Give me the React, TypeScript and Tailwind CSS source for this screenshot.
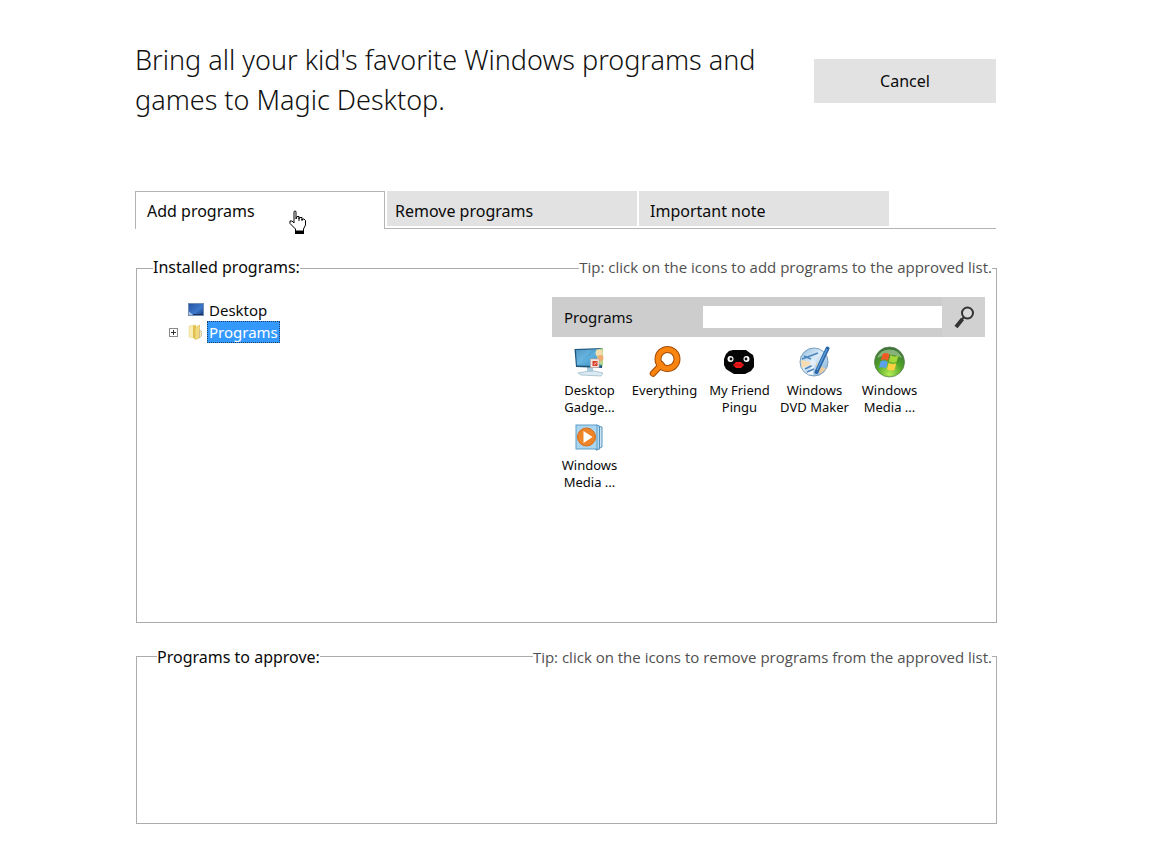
import React, { useState } from 'react';

interface Program {
  id: string;
  lines: string[];
  icon: React.ReactNode;
}

const GadgetsIcon = () => (
  <svg width="32" height="32" viewBox="0 0 32 32" aria-hidden="true">
    <defs>
      <linearGradient id="gadgetScreen" x1="0" y1="0" x2="1" y2="1">
        <stop offset="0" stopColor="#2f73a8" />
        <stop offset="0.5" stopColor="#5fb0dd" />
        <stop offset="1" stopColor="#3c8cc4" />
      </linearGradient>
    </defs>
    <path d="M4 27 L18 24.500 L29 27 L27 30 L7 29 Z" fill="#dbeaf2" stroke="#9dbccd" strokeWidth="0.8" />
    <path d="M13 21h6v5h-6z" fill="#a9cbdd" />
    <path d="M0.500 3 L29 2 L28 22 L2 21 Z" fill="#1f5378" />
    <path d="M2 4 L27 3 L27 20 L3 19.500 Z" fill="url(#gadgetScreen)" />
    <path d="M2 4 L18 4 L5 18 L3 19 Z" fill="#7cc4ea" opacity="0.45" />
    <path d="M22 4 L29 2 L29 20 L24 17 Z" fill="#b9d88c" />
    <circle cx="25" cy="7" r="3.500" fill="#f3dcae" />
    <circle cx="26.500" cy="12" r="3" fill="#efaa72" />
    <rect x="16.500" y="13" width="8.500" height="8.500" fill="#f4e3dc" stroke="#c9a8a0" strokeWidth="0.6" />
    <rect x="18.500" y="15" width="5" height="5" fill="#d8432f" />
    <path d="M20 18.500 L22.500 16.500" stroke="#ffffff" strokeWidth="0.8" />
  </svg>
);

const EverythingIcon = () => (
  <svg width="32" height="32" viewBox="0 0 32 32" aria-hidden="true">
    <path d="M12.500 18.500 L4 27.500" stroke="#a14c05" strokeWidth="6.500" strokeLinecap="round" />
    <circle cx="18.500" cy="13" r="9.500" fill="none" stroke="#a14c05" strokeWidth="7" />
    <path d="M12.500 18.500 L4 27.500" stroke="#f98410" strokeWidth="4.500" strokeLinecap="round" />
    <circle cx="18.500" cy="13" r="9.500" fill="none" stroke="#f98410" strokeWidth="5" />
  </svg>
);

const PinguIcon = () => (
  <svg width="32" height="32" viewBox="0 0 32 32" aria-hidden="true">
    <path d="M9 4h13l4 3 3 2 1 4v8l-3 4-4 2-2 1H10l-5-3-3-2-2-4v-6l2-5 3-3z" fill="#050505" />
    <circle cx="6.500" cy="13" r="3" fill="#ffffff" />
    <circle cx="22.500" cy="13" r="3" fill="#ffffff" />
    <circle cx="7" cy="13" r="1.400" fill="#111111" />
    <circle cx="22" cy="13" r="1.400" fill="#111111" />
    <path d="M9 19 L12 16 L17 16 L20 19 L17 22 L12 22 Z" fill="#f01818" />
    <path d="M9 19h11" stroke="#9c0b0b" strokeWidth="0.8" />
  </svg>
);

const DvdMakerIcon = () => (
  <svg width="32" height="32" viewBox="0 0 32 32" aria-hidden="true">
    <defs>
      <linearGradient id="dvdDisc" x1="0" y1="0" x2="1" y2="1">
        <stop offset="0" stopColor="#8dbbe2" />
        <stop offset="0.45" stopColor="#dcebf7" />
        <stop offset="1" stopColor="#74a9d6" />
      </linearGradient>
    </defs>
    <circle cx="15" cy="16" r="14" fill="url(#dvdDisc)" stroke="#7d9fba" strokeWidth="1" />
    <path d="M15 17 L2 14 L3 22 Z" fill="#f6dcae" />
    <path d="M16 17 L27 23 L21 28 Z" fill="#ecca9c" />
    <path d="M15 17 L8 28 L14 29 Z" fill="#ffffff" opacity="0.8" />
    <path d="M3 13 L19 7 M5 10 L12 13 M6 23 L16 18 M8 26 L15 23" stroke="#4d86bd" strokeWidth="1.600" />
    <circle cx="14" cy="17" r="3" fill="#e4f0f9" />
    <path d="M28.500 2.500 L17.500 26" stroke="#2a66a6" strokeWidth="4" strokeLinecap="round" />
    <path d="M28 3 L18 24" stroke="#5a9bd8" strokeWidth="1.500" />
  </svg>
);

const MediaCenterIcon = () => (
  <svg width="32" height="32" viewBox="0 0 32 32" aria-hidden="true">
    <defs>
      <radialGradient id="orb" cx="0.5" cy="0.9" r="0.9">
        <stop offset="0" stopColor="#b4ec54" />
        <stop offset="0.5" stopColor="#50a428" />
        <stop offset="1" stopColor="#3a6b3a" />
      </radialGradient>
    </defs>
    <circle cx="15.500" cy="16" r="15" fill="url(#orb)" stroke="#57824c" strokeWidth="0.8" />
    <path d="M3 12 A13.500 13.500 0 0 1 28 12 Q15.500 5 3 12 Z" fill="#dcefd0" opacity="0.45" />
    <path d="M8.500 8 Q12 6 15.500 8.500 L14 15 Q10.500 12.500 7 14.500 Z" fill="#ee5a24" />
    <path d="M16.500 9 Q20 11.500 24.500 9.500 L22.500 16 Q19 17.500 15 15.500 Z" fill="#a5d63a" />
    <path d="M6.500 15.500 Q10 13.500 13.700 16 L12 22.500 Q8.500 20.500 5 22 Z" fill="#5aa0ea" />
    <path d="M14.700 16.800 Q18.500 19 22.300 17.200 L20.500 24 Q17 25.500 13 23.200 Z" fill="#fdd040" />
  </svg>
);

const MediaPlayerIcon = () => (
  <svg width="32" height="32" viewBox="0 0 32 32" aria-hidden="true">
    <path d="M22 5 L28 6 L28 26 L22 29 Z" fill="#cfe4f2" stroke="#5795bd" strokeWidth="1" />
    <path d="M22 4 L25.500 5 L25.500 28 L22 29 Z" fill="#b4d8ee" stroke="#4c8fbc" strokeWidth="1" />
    <rect x="2" y="4" width="21" height="24" fill="#a9d5f0" stroke="#5f9fc8" strokeWidth="1" />
    <circle cx="12.500" cy="16" r="9" fill="#ee8428" stroke="#d66c17" strokeWidth="1" />
    <path d="M9.500 10 L18.500 16 L9.500 22 Z" fill="#ffffff" />
  </svg>
);

const SearchIcon = () => (
  <svg width="22" height="24" viewBox="0 0 22 24" aria-hidden="true">
    <circle cx="14.500" cy="8" r="5.500" fill="#d9d9d9" stroke="#333333" strokeWidth="2" />
    <path d="M11 12 L8.500 15" stroke="#333333" strokeWidth="2" />
    <path d="M9.500 14 L3 22" stroke="#333333" strokeWidth="3.800" />
  </svg>
);

const DesktopIcon = () => (
  <svg width="16" height="16" viewBox="0 0 16 16" aria-hidden="true">
    <defs>
      <linearGradient id="desk" x1="0" y1="0" x2="1" y2="1">
        <stop offset="0" stopColor="#26549f" />
        <stop offset="0.6" stopColor="#3d78cc" />
        <stop offset="1" stopColor="#17356f" />
      </linearGradient>
    </defs>
    <rect x="0.500" y="1.500" width="15" height="12" fill="url(#desk)" stroke="#6f8fb5" />
    <path d="M1 13 V9.500 L5 13 Z" fill="#a9c8ea" />
    <path d="M5 12.500h10" stroke="#1b2f5a" />
  </svg>
);

const FolderIcon = () => (
  <svg width="16" height="16" viewBox="0 0 16 16" aria-hidden="true">
    <path d="M1 2 L6 1 L6 14 L1 13 Z" fill="#f8ecb4" stroke="#ead888" strokeWidth="0.6" />
    <path d="M5 2 L8 0.500 L8 15 L5 14 Z" fill="#e2c350" />
    <path d="M7 4 L11.500 1 L11.500 14 L7 15.500 Z" fill="#f0da7c" stroke="#d8b94c" strokeWidth="0.6" />
    <path d="M11.500 6 L13.500 7 L13.500 12 L11.500 14 Z" fill="#f2e8c0" stroke="#b9ae84" strokeWidth="0.6" />
  </svg>
);

const HandPointer = () => (
  <svg width="18" height="24" viewBox="0 0 18 24" aria-hidden="true">
    <path
      d="M5 2 Q5 1 6 1 Q7 1 7 2 V9 L8 6.500 H10 V9 L10.500 7.500 H13 V10 L13.500 9 H15 L16.500 10.500 V15 L14.500 19 V21 H6.500 V19 L1 13.500 V11 H3 L5 13 Z"
      fill="#ffffff"
      stroke="#000000"
      strokeLinejoin="round"
    />
    <path d="M10 8v3M13 9v2" stroke="#000000" />
    <path d="M6 21h9v3H6z" fill="#000000" />
  </svg>
);

const programs: Program[] = [
  { id: 'gadgets', lines: ['Desktop', 'Gadge...'], icon: <GadgetsIcon /> },
  { id: 'everything', lines: ['Everything'], icon: <EverythingIcon /> },
  { id: 'pingu', lines: ['My Friend', 'Pingu'], icon: <PinguIcon /> },
  { id: 'dvd', lines: ['Windows', 'DVD Maker'], icon: <DvdMakerIcon /> },
  { id: 'media-center', lines: ['Windows', 'Media ...'], icon: <MediaCenterIcon /> },
  { id: 'media-player', lines: ['Windows', 'Media ...'], icon: <MediaPlayerIcon /> },
];

interface PanelProps {
  title: string;
  tip: string;
  className: string;
  titleClassName: string;
  children?: React.ReactNode;
}

const Panel = ({ title, tip, className, titleClassName, children }: PanelProps) => (
  <section className={`ml-px border border-[#ababab] ${className}`}>
    {/* title and tip sit on the top border */}
    <div className={`flex h-6 items-center justify-between pr-1 leading-6 ${titleClassName}`}>
      <h2 className="bg-white text-base">{title}</h2>
      <p className="bg-white font-['Open_Sans',sans-serif] text-[15px] text-[#505050]">{tip}</p>
    </div>
    {children}
  </section>
);

const App = () => {
  const [query, setQuery] = useState('');

  return (
    <main className="min-h-screen bg-white pt-10 pr-[155px] pb-10 pl-[135px] font-['Noto_Sans','Open_Sans',sans-serif] text-[#0a0a0a]">
      <header className="mr-px flex items-start justify-between">
        <h1 className="text-[27px] leading-10 font-light text-[#111111]">
          Bring all your kid's favorite Windows programs and
          <br />
          games to Magic Desktop.
        </h1>
        <button type="button" className="mt-[19px] h-11 w-[182px] shrink-0 bg-[#e2e2e2] text-base">
          Cancel
        </button>
      </header>

      <div role="tablist" className="mt-[71px] mr-px flex">
        <button
          type="button"
          role="tab"
          aria-selected="true"
          className="relative h-[38px] w-[250px] border-x border-t border-[#b4b4b4] pl-[11px] text-left text-base"
        >
          Add programs
          <span className="absolute top-[18px] left-[153px]">
            <HandPointer />
          </span>
        </button>
        <div className="flex flex-1 gap-0.5 border-b border-[#b4b4b4] pb-0.5 pl-0.5">
          <button type="button" role="tab" aria-selected="false" className="w-[250px] bg-[#e2e2e2] pt-1 pl-2 text-left text-base">
            Remove programs
          </button>
          <button type="button" role="tab" aria-selected="false" className="w-[250px] bg-[#e2e2e2] pt-1 pl-[11px] text-left text-base">
            Important note
          </button>
        </div>
      </div>

      <Panel
        title="Installed programs:"
        tip="Tip: click on the icons to add programs to the approved list."
        className="mt-[39px] min-h-[355px]"
        titleClassName="-mt-3.5 pl-4"
      >
        <div className="flex justify-between pt-[18px] pr-[11px] pl-8">
          <ul className="mt-0.5 text-[15px] leading-[22px]">
            <li className="flex items-center gap-[3px] pl-[19px]">
              <DesktopIcon />
              <span className="px-0.5">Desktop</span>
            </li>
            <li className="flex items-center">
              <button
                type="button"
                aria-label="Expand Programs"
                className="mr-2.5 flex size-[9px] items-center justify-center border border-[#8a8a8a]"
              >
                <svg width="5" height="5" viewBox="0 0 5 5" aria-hidden="true">
                  <path d="M0 2.500h5M2.500 0v5" stroke="#333333" />
                </svg>
              </button>
              <FolderIcon />
              <span className="ml-[3px] border border-dotted border-[#1d3f66] bg-[#3399ff] px-px leading-5 text-white">Programs</span>
            </li>
          </ul>

          <div className="w-[433px]">
            <div className="flex h-10 items-center bg-[#cdcdcd] pl-3">
              <label htmlFor="program-search" className="w-[139px] text-[15px]">
                Programs
              </label>
              <input
                id="program-search"
                type="text"
                value={query}
                onChange={(e) => setQuery(e.target.value)}
                className="h-[22px] min-w-0 flex-1 bg-white px-1 text-[13px] outline-none"
              />
              <button type="button" aria-label="Search" className="flex h-10 w-[43px] items-center justify-center bg-[#d1d1d1]">
                <SearchIcon />
              </button>
            </div>
            <div className="flex flex-wrap pt-[9px]">
              {programs.map((program) => (
                <button
                  key={program.id}
                  type="button"
                  className="flex min-h-[75px] w-[75px] flex-col items-center gap-1 text-[13px] leading-[17px]"
                >
                  {program.icon}
                  <span>
                    {program.lines.map((line) => (
                      <span key={line} className="block whitespace-nowrap">
                        {line}
                      </span>
                    ))}
                  </span>
                </button>
              ))}
            </div>
          </div>
        </div>
      </Panel>

      <Panel
        title="Programs to approve:"
        tip="Tip: click on the icons to remove programs from the approved list."
        className="mt-[33px] min-h-[168px]"
        titleClassName="-mt-3 pl-5"
      />
    </main>
  );
};

export default App;
